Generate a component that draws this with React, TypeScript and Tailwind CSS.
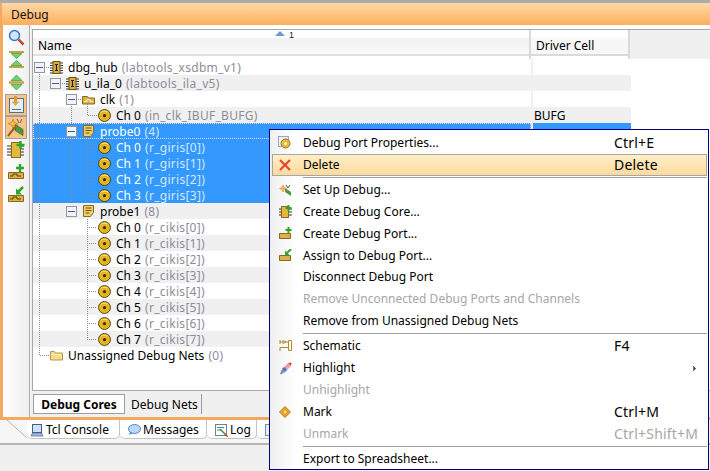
import React from 'react';
import { ChevronRight } from 'lucide-react';

const font = "font-['Noto_Sans',sans-serif] text-[12px] leading-none";

function Ball() {
  return (
    <svg width="13" height="13" viewBox="0 0 13 13" className="shrink-0">
      <circle cx="6.500" cy="6.500" r="6" fill="#e6b422" stroke="#3a2c00" strokeWidth="0.800" />
      <path d="M2 4.500a5 5 0 0 1 9 0a6 6 0 0 0-9 0z" fill="#fff4b8" />
      <circle cx="6.500" cy="6.700" r="1.600" fill="#3c2e00" />
    </svg>
  );
}

function Chip() {
  return (
    <svg width="13" height="13" viewBox="0 0 13 13" className="shrink-0">
      <path d="M0 2h13M0 4.500h13M0 7h13M0 9.500h13M0 12h13" stroke="#333" strokeWidth="1" />
      <rect x="3" y="0.500" width="7" height="12" fill="#d9ae3f" stroke="#6b5210" />
      <path d="M5 3.500h3M6.500 3.500v6M5 9.500h3" stroke="#222" strokeWidth="1.200" fill="none" />
    </svg>
  );
}

function ClkIcon() {
  return (
    <svg width="13" height="13" viewBox="0 0 13 13" className="shrink-0">
      <path d="M0.500 3.500h5l1 1.500h6v6h-12z" fill="#d9b04a" stroke="#8a6a1a" />
      <path d="M2 8.500h3v-2h3v2h3" stroke="#fff6d0" fill="none" />
    </svg>
  );
}

function ProbeIcon() {
  return (
    <svg width="13" height="14" viewBox="0 0 13 14" className="shrink-0">
      <path d="M1.500 1.500h10v7l-3 4h-7z" fill="#f0cf6c" stroke="#8a6a1a" />
      <path d="M3.500 4h6M3.500 6.500h6M3.500 9h4" stroke="#6b5210" fill="none" />
    </svg>
  );
}

function Folder() {
  return (
    <svg width="13" height="12" viewBox="0 0 13 12" className="shrink-0">
      <path d="M0.500 2.500h4l1 1.500h7v7h-12z" fill="#f7dc84" stroke="#b3975a" />
      <path d="M1.500 5.500h10" stroke="#fff3c4" />
    </svg>
  );
}

function Minus({ left }: { left: number }) {
  return (
    <span
      className="absolute top-[3px] flex h-[11px] w-[11px] items-center justify-center border border-[#8f979f] bg-[#f4f4f4]"
      style={{ left }}
    >
      <span className="h-px w-[7px] bg-[#3a5aa0]" />
    </span>
  );
}

type Row = {
  icon: React.ReactNode;
  x: number;
  name: string;
  note: string;
  box?: number;
  sel?: boolean;
  focus?: boolean;
  driver?: string;
};

const ch = (n: number, note: string, sel = false): Row => ({
  icon: <Ball />,
  x: 98,
  name: `Ch ${n}`,
  note,
  sel,
});

const rows: Row[] = [
  { icon: <Chip />, x: 50, name: 'dbg_hub', note: '(labtools_xsdbm_v1)', box: 34 },
  { icon: <Chip />, x: 66, name: 'u_ila_0', note: '(labtools_ila_v5)', box: 50 },
  { icon: <ClkIcon />, x: 82, name: 'clk', note: '(1)', box: 66 },
  { ...ch(0, '(in_clk_IBUF_BUFG)'), driver: 'BUFG' },
  { icon: <ProbeIcon />, x: 82, name: 'probe0', note: '(4)', box: 66, sel: true, focus: true },
  ch(0, '(r_giris[0])', true),
  ch(1, '(r_giris[1])', true),
  ch(2, '(r_giris[2])', true),
  ch(3, '(r_giris[3])', true),
  { icon: <ProbeIcon />, x: 82, name: 'probe1', note: '(8)', box: 66 },
  ...[0, 1, 2, 3, 4, 5, 6, 7].map((n) => ch(n, `(r_cikis[${n}])`)),
  { icon: <Folder />, x: 50, name: 'Unassigned Debug Nets', note: '(0)' },
];

function TreeRow({ row, index }: { row: Row; index: number }) {
  const striped = index % 2 === 1;
  const bg = row.sel ? 'bg-[#3399ff]' : striped ? 'bg-[#f0f0f0]' : 'bg-white';
  return (
    <div className={`flex h-4 w-[598px] ${bg}`}>
      <div className="relative h-4 w-[498px]">
        {row.focus && <div className="absolute inset-0 border border-dotted border-[#e8d0ff]" />}
        {row.box !== undefined && <Minus left={row.box - 33} />}
        <div className="absolute top-0 flex h-4 items-center" style={{ left: row.x - 33 }}>
          {row.icon}
          <span className={`ml-[5px] whitespace-nowrap pt-px ${row.sel ? 'text-white' : 'text-black'}`}>{row.name}</span>
          <span className={`ml-1 whitespace-nowrap pt-px tracking-[0.3px] ${row.sel ? 'text-[#d6e6fb]' : 'text-[#8d8d99]'}`}>{row.note}</span>
        </div>
      </div>
      <div className="flex h-4 flex-1 items-center border-l-2 border-[#f0f0f0] pl-[1px] pt-px text-black">{row.driver}</div>
    </div>
  );
}

function Guides() {
  const d = [
    'M39.500 72V355.500H49',
    'M71.500 104V126M71.500 137V203',
    'M87.500 104V115.500H97',
    'M87.500 139V195.500H97',
    'M87 147.500H97M87 163.500H97M87 179.500H97',
    'M87.500 219V339.500H97',
    'M87 227.500H97M87 243.500H97M87 259.500H97M87 275.500H97M87 291.500H97M87 307.500H97M87 323.500H97',
    'M44 67.500H49M60 83.500H65M76 99.500H81',
  ].join('');
  return (
    <svg width="110" height="300" viewBox="33 59 110 300" className="pointer-events-none absolute left-0 top-0">
      <path d={d} stroke="#8c8c8c" strokeDasharray="1 1" fill="none" />
    </svg>
  );
}

function ToolBtn({ active, children }: { active?: boolean; children: React.ReactNode }) {
  return (
    <div
      className={`flex h-[22.500px] w-[22px] items-center justify-center ${
        active === true ? 'border border-[#a8a096] bg-[#f9c48a]' : ''
      }`}
    >
      {children}
    </div>
  );
}

function Toolbar() {
  return (
    <div className="flex w-[26px] flex-col items-center bg-gradient-to-r from-white to-[#efefef] pt-[1px]">
      <ToolBtn>
        <svg width="17" height="17" viewBox="0 0 17 17">
          <circle cx="6.500" cy="6.500" r="5" fill="#cfe6fb" stroke="#3a78c9" strokeWidth="1.500" />
          <path d="M10.500 10.500l5 5" stroke="#c9482c" strokeWidth="2.500" />
        </svg>
      </ToolBtn>
      <ToolBtn>
        <svg width="15" height="17" viewBox="0 0 15 17">
          <path d="M0 1h15M0 16h15" stroke="#c4a23c" strokeWidth="2" />
          <path d="M2 2.500h11l-5.500 5z" fill="#6fd36f" stroke="#2b8a2b" strokeWidth="0.600" />
          <path d="M2 14.500h11l-5.500-5z" fill="#6fd36f" stroke="#2b8a2b" strokeWidth="0.600" />
        </svg>
      </ToolBtn>
      <ToolBtn>
        <svg width="15" height="17" viewBox="0 0 15 17">
          <path d="M0 8.500h15" stroke="#c4a23c" strokeWidth="2.500" />
          <path d="M2 6.500h11l-5.500-5.500z" fill="#6fd36f" stroke="#2b8a2b" strokeWidth="0.600" />
          <path d="M2 10.500h11l-5.500 5.500z" fill="#6fd36f" stroke="#2b8a2b" strokeWidth="0.600" />
        </svg>
      </ToolBtn>
      <ToolBtn active>
        <svg width="17" height="18" viewBox="0 0 17 18">
          <rect x="1.500" y="2.500" width="14" height="14" fill="#e6eef8" stroke="#54708f" />
          <path d="M7.500 0v6" stroke="#e09a2e" strokeWidth="3" />
          <path d="M3.500 5.500h8l-4 4.500z" fill="#e9a437" />
          <path d="M4 13.500h9" stroke="#54708f" />
        </svg>
      </ToolBtn>
      <ToolBtn active>
        <svg width="19" height="19" viewBox="0 0 19 19">
          <path d="M8 6l8 5.500v6l-8-5z" fill="#4d9a3e" stroke="#2b5d22" strokeWidth="0.600" />
          <path d="M10 1l2 4M15 1l-2 4" stroke="#666" />
          <path d="M1 18l7-9" stroke="#8a5a1a" strokeWidth="2" />
          <path d="M6 1l1.300 3.500 3.500 1.300-3.500 1.300L6 10.500 4.700 7.100 1.200 5.800l3.500-1.300z" fill="#f4c534" stroke="#c9482c" strokeWidth="0.500" />
        </svg>
      </ToolBtn>
      <ToolBtn>
        <svg width="18" height="18" viewBox="0 0 18 18">
          <path d="M0 5h17M0 8h17M0 11h17M0 14h17" stroke="#333" />
          <rect x="4.500" y="1.500" width="9" height="15" fill="#e4b83f" stroke="#8a6a1a" />
          <path d="M13.500 0v8M9.500 4h8" stroke="#2ba52b" strokeWidth="2.500" />
        </svg>
      </ToolBtn>
      <ToolBtn>
        <svg width="18" height="18" viewBox="0 0 18 18">
          <path d="M1.500 9.500h15v6h-15z" fill="#d9b04a" stroke="#8a6a1a" />
          <path d="M3 13h3v-2h4v2h4" stroke="#5a4300" fill="none" />
          <path d="M13 1v8M9 5h8" stroke="#2ba52b" strokeWidth="2.500" />
        </svg>
      </ToolBtn>
      <ToolBtn>
        <svg width="18" height="18" viewBox="0 0 18 18">
          <path d="M1.500 9.500h15v6h-15z" fill="#d9b04a" stroke="#8a6a1a" />
          <path d="M3 13h3v-2h4v2h4" stroke="#5a4300" fill="none" />
          <path d="M16 1l-5 5" stroke="#2ba52b" strokeWidth="2.500" />
          <path d="M9 2.500v6h6z" fill="#2ba52b" />
        </svg>
      </ToolBtn>
    </div>
  );
}

function Tab({ w, pad, icon, label }: { w: number; pad: number; icon: React.ReactNode; label: string }) {
  return (
    <div
      className="flex h-[19px] shrink-0 items-center gap-[2px] rounded-b-[5px] border-b border-r border-[#c4c4c4] bg-white pt-[2px]"
      style={{ width: w, paddingLeft: pad }}
    >
      {icon}
      <span className="whitespace-nowrap text-black">{label}</span>
    </div>
  );
}

type MenuEntry = { label: string; key?: string; off?: boolean; hot?: boolean; arrow?: boolean; icon?: React.ReactNode } | 'sep';

const menu: MenuEntry[] = [
  {
    label: 'Debug Port Properties...',
    key: 'Ctrl+E',
    icon: (
      <svg width="14" height="14" viewBox="0 0 14 14">
        <rect x="0.500" y="0.500" width="10" height="10" fill="#eef2fa" stroke="#98a6c2" />
        <circle cx="7.500" cy="7.500" r="4.500" fill="#e8b93c" stroke="#9a7414" />
        <circle cx="7.500" cy="7.500" r="1.500" fill="#fff3c4" />
      </svg>
    ),
  },
  {
    label: 'Delete',
    key: 'Delete',
    hot: true,
    icon: (
      <svg width="12" height="12" viewBox="0 0 12 12">
        <path d="M1 1l10 10M11 1L1 11" stroke="#e8402f" strokeWidth="2" />
      </svg>
    ),
  },
  'sep',
  {
    label: 'Set Up Debug...',
    icon: (
      <svg width="13" height="13" viewBox="0 0 13 13">
        <path d="M6 4l6 4v4l-6-4z" fill="#4d9a3e" />
        <path d="M7 1l2 3M11 1L9 4" stroke="#555" />
        <path d="M4 1l1 2.500 2.500 1-2.500 1L4 8 3 5.500l-2.500-1L3 3.500z" fill="#f4c534" stroke="#c9482c" strokeWidth="0.400" />
      </svg>
    ),
  },
  {
    label: 'Create Debug Core...',
    icon: (
      <svg width="13" height="13" viewBox="0 0 13 13">
        <path d="M0 4h13M0 7h13M0 10h13" stroke="#333" />
        <rect x="2.500" y="1.500" width="7" height="11" fill="#e4b83f" stroke="#8a6a1a" />
        <path d="M9.500 0v6M6.500 3h6" stroke="#2ba52b" strokeWidth="2" />
      </svg>
    ),
  },
  {
    label: 'Create Debug Port...',
    icon: (
      <svg width="13" height="13" viewBox="0 0 13 13">
        <path d="M0.500 6.500h11v5h-11z" fill="#d9b04a" stroke="#8a6a1a" />
        <path d="M9.500 0v6M6.500 3h6" stroke="#2ba52b" strokeWidth="2" />
      </svg>
    ),
  },
  {
    label: 'Assign to Debug Port...',
    icon: (
      <svg width="13" height="13" viewBox="0 0 13 13">
        <path d="M0.500 6.500h11v5h-11z" fill="#d9b04a" stroke="#8a6a1a" />
        <path d="M12 0L8 4" stroke="#2ba52b" strokeWidth="2" />
        <path d="M6 1.500v5h5z" fill="#2ba52b" />
      </svg>
    ),
  },
  { label: 'Disconnect Debug Port' },
  { label: 'Remove Unconnected Debug Ports and Channels', off: true },
  { label: 'Remove from Unassigned Debug Nets' },
  'sep',
  {
    label: 'Schematic',
    key: 'F4',
    icon: (
      <svg width="13" height="12" viewBox="0 0 13 12">
        <path d="M1 0v4M1 2h3M4 0.500l3 1.500-3 1.500zM7 2h2.500M9.500 0.500h3v10h-3zM1 7.500h8.500M1 7.500v3.500" stroke="#b08a2c" fill="none" />
      </svg>
    ),
  },
  {
    label: 'Highlight',
    arrow: true,
    icon: (
      <svg width="13" height="13" viewBox="0 0 13 13">
        <path d="M9 1l3 3-6 6-3-3z" fill="#f0a0a0" />
        <path d="M12.500 0.500L9 1l3 3z" fill="#d8412f" />
        <path d="M5 5l3 3-2 2-3-3z" fill="#3f78d0" />
        <path d="M3 7l3 3-4 2.500-1-1z" fill="#8a8f99" />
      </svg>
    ),
  },
  { label: 'Unhighlight', off: true },
  {
    label: 'Mark',
    key: 'Ctrl+M',
    icon: (
      <svg width="12" height="12" viewBox="0 0 12 12">
        <path d="M6 0.500L11.500 6 6 11.500 0.500 6z" fill="#eba52c" stroke="#b37d16" />
        <path d="M6 3.500L8.500 6 6 8.500 3.500 6z" fill="#f9d77e" stroke="#b37d16" strokeWidth="0.600" />
      </svg>
    ),
  },
  { label: 'Unmark', key: 'Ctrl+Shift+M', off: true },
  'sep',
  { label: 'Export to Spreadsheet...' },
];

function ContextMenu() {
  return (
    <div className="absolute left-[269px] top-[129px] h-[341px] w-[440px] border border-[#000080] bg-gradient-to-r from-[#efefef] from-0% via-white via-[6%] to-white pl-[2px] pr-[1px] pt-[2px]">
      {menu.map((m, i) =>
        m === 'sep' ? (
          <div key={i} className="flex h-[3.700px] items-center pl-[31px]">
            <div className="h-px flex-1 bg-[#a0a0a0]" />
          </div>
        ) : (
          <div
            key={i}
            className={`relative flex h-[21.800px] items-center ${
              m.hot ? 'bg-gradient-to-b from-[#fff0c8] to-[#fdd89c] shadow-[inset_0_0_0_1px_#a6a6a6]' : ''
            } ${m.off ? 'text-[#a6a6a6]' : 'text-black'}`}
          >
            <span className="flex w-[31px] shrink-0 justify-center pr-[5px]">{m.icon}</span>
            <span className="whitespace-nowrap">{m.label}</span>
            {m.key && (
              <span className="absolute left-[342px] whitespace-nowrap text-[14px] tracking-[0.2px]">{m.key}</span>
            )}
            {m.arrow && <ChevronRight className="absolute right-[8px] h-[9px] w-[9px] fill-[#333] text-[#333]" />}
          </div>
        ),
      )}
    </div>
  );
}

export default function App() {
  return (
    <div className={`relative h-[471px] w-[710px] overflow-hidden bg-[#f0f0f0] ${font}`}>
      <div className="h-[3px] bg-[#ababab]" />
      <div className="flex h-[22px] items-center border-l-2 border-[#f5a95e] bg-gradient-to-b from-[#ffd9a4] to-[#fdae5e] pl-[9px] pt-[2px] text-[#111]">
        Debug
      </div>
      <div className="flex h-[395px] border-b-[3px] border-l-[3px] border-[#f5a95e] bg-white">
        <Toolbar />
        <div className="w-[3px] border-l border-[#b0b0b0] bg-[#f0f0f0]" />
        <div className="flex min-w-0 flex-1 flex-col pt-[4px]">
          <div className="flex flex-1 flex-col border-b border-l border-t border-[#a8a8a8] bg-white">
            <div className="relative flex h-[29px] bg-[#f0f0f0]">
              <div className="flex w-[498px] flex-col border-r-2 border-[#dadada]">
                <div className="h-[8px] bg-white" />
                <div className="flex h-[18px] items-center border-b-2 border-[#e0e0e0] bg-gradient-to-b from-[#f2f2f2] to-[#f9f9f9] pl-[5px] text-black">
                  Name
                </div>
                <div className="flex-1 bg-white" />
              </div>
              <div className="flex w-[99px] flex-col border-r-2 border-[#dadada]">
                <div className="h-[8px] bg-white" />
                <div className="flex h-[18px] items-center border-b-2 border-[#dadada] bg-[#f7f7f7] pl-[5px] text-black">Driver Cell</div>
                <div className="flex-1 bg-white" />
              </div>
              <svg width="28" height="8" viewBox="0 0 28 8" className="absolute left-[242px] top-0">
                <path d="M0 6l5-5 5 5z" fill="#6f9cc9" />
                <text x="14" y="7.500" fontSize="9" fontFamily="Liberation Sans, sans-serif" fill="#222">1</text>
              </svg>
            </div>
            <div className="relative flex-1">
              {rows.map((r, i) => (
                <TreeRow key={i} row={r} index={i} />
              ))}
              <Guides />
            </div>
          </div>
          <div className="flex h-[26px] items-start bg-[#f0f0f0] pl-[1px] pt-[3px]">
            <div className="flex h-[20px] w-[92px] items-center justify-center border border-[#9c9c9c] bg-white pt-px font-bold text-black">
              Debug Cores
            </div>
            <div className="ml-[6px] flex h-[20px] w-[71px] items-center border-r border-[#9c9c9c] pt-px text-black">Debug Nets</div>
          </div>
        </div>
      </div>
      <div className="relative h-[25px] border-b-2 border-[#b4b4b4] bg-[#f6f6f6]">
        <svg width="28" height="20" viewBox="0 0 28 20" className="absolute left-0 top-0">
          <path d="M7 0l20 18" stroke="#b4b4b4" fill="none" />
        </svg>
        <div className="flex pl-[27px]">
          <Tab
            w={93}
            pad={3}
            label="Tcl Console"
            icon={
              <svg width="14" height="13" viewBox="0 0 14 13">
                <rect x="2.500" y="0.500" width="9" height="8" fill="#cfe0f4" stroke="#44608a" />
                <path d="M1 12l1.500-3h9l1.500 3z" fill="#a9bedb" stroke="#44608a" strokeWidth="0.700" />
              </svg>
            }
          />
          <Tab
            w={87}
            pad={8}
            label="Messages"
            icon={
              <svg width="13" height="12" viewBox="0 0 13 12">
                <ellipse cx="6.500" cy="5" rx="6" ry="4.500" fill="#bcd8f7" stroke="#4f86c9" />
                <path d="M2 8l-1 3 4-2z" fill="#4f86c9" />
              </svg>
            }
          />
          <Tab
            w={50}
            pad={8}
            label="Log"
            icon={
              <svg width="13" height="13" viewBox="0 0 13 13">
                <rect x="0.500" y="0.500" width="11" height="11" fill="#fff" stroke="#6f7f95" />
                <path d="M2 3.500h7M2 6h4" stroke="#5a7a9a" />
                <path d="M5 5l6 6" stroke="#2f9a3a" strokeWidth="1.500" />
                <path d="M10 10l3 3" stroke="#d8412f" strokeWidth="1.500" />
              </svg>
            }
          />
          <Tab w={40} pad={8} label="" icon={<span className="h-[12px] w-[12px] border border-[#6f8fc0] bg-[#e4eefb]" />} />
        </div>
      </div>
      <ContextMenu />
    </div>
  );
}
